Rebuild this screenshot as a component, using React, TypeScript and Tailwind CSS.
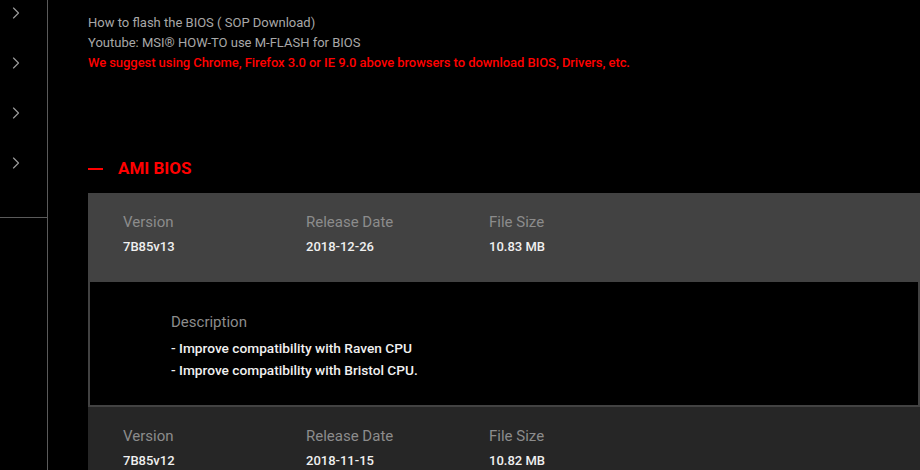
import { ChevronRight } from 'lucide-react'

const font = { fontFamily: 'Roboto, "Liberation Sans", sans-serif' }

interface BiosRow {
  version: string
  date: string
  size: string
}

function InfoRow({ row, dark }: { row: BiosRow; dark?: boolean }) {
  return (
    <div className={`${dark ? 'bg-[#262626]' : 'bg-[#424242]'} h-[89px] pl-[35px] pt-[18px] flex`}>
      {[
        ['Version', row.version],
        ['Release Date', row.date],
        ['File Size', row.size],
      ].map(([label, value]) => (
        <div key={label} className="w-[183px]">
          <div className="text-[15px] leading-[22px] text-[#8c8c8c]">{label}</div>
          <div className="text-[13px] leading-[20px] mt-[4px] font-medium text-[#f0f0f0]">{value}</div>
        </div>
      ))}
    </div>
  )
}

export default function App() {
  return (
    <div className="w-[920px] h-[470px] bg-black flex overflow-hidden" style={font}>
      {/* Sidebar */}
      <div className="w-[48px] shrink-0 border-r border-[#5a5a5a] h-full flex flex-col">
        <div className="border-b border-[#5a5a5a] h-[218px] pt-[3px]">
          {[0, 1, 2, 3].map(i => (
            <div key={i} className="h-[50px] pl-[6px]">
              <ChevronRight size={20} strokeWidth={1.4} className="text-[#9a9a9a]" />
            </div>
          ))}
        </div>
      </div>

      {/* Main */}
      <div className="flex-1 pl-[40px] min-w-0">
        <div className="pt-[13px] text-[13px] leading-[20px]">
          <div className="text-[#a8a8a8]">How to flash the BIOS ( SOP Download)</div>
          <div className="text-[#a8a8a8]">Youtube: MSI® HOW-TO use M-FLASH for BIOS</div>
          <div className="text-[#ff0000] font-medium tracking-[-0.005em]">
            We suggest using Chrome, Firefox 3.0 or IE 9.0 above browsers to download BIOS, Drivers, etc.
          </div>
        </div>

        <div className="mt-[84px] flex items-center h-[24px]">
          <div className="w-[15px] h-[2px] bg-[#ff0000]" />
          <div className="ml-[15px] text-[#ff0000] text-[17px] font-bold">AMI BIOS</div>
        </div>

        <div className="mt-[12px]">
          <InfoRow row={{ version: '7B85v13', date: '2018-12-26', size: '10.83 MB' }} />
          <div className="border-2 border-t-0 border-[#424242] h-[125px] pl-[81px] pt-[29px]">
            <div className="text-[15px] leading-[22px] text-[#8c8c8c]">Description</div>
            <div className="text-[13.7px] leading-[22px] mt-[4px] text-[#f0f0f0] font-medium">
              <div>- Improve compatibility with Raven CPU</div>
              <div>- Improve compatibility with Bristol CPU.</div>
            </div>
          </div>
          <InfoRow dark row={{ version: '7B85v12', date: '2018-11-15', size: '10.82 MB' }} />
        </div>
      </div>
    </div>
  )
}
